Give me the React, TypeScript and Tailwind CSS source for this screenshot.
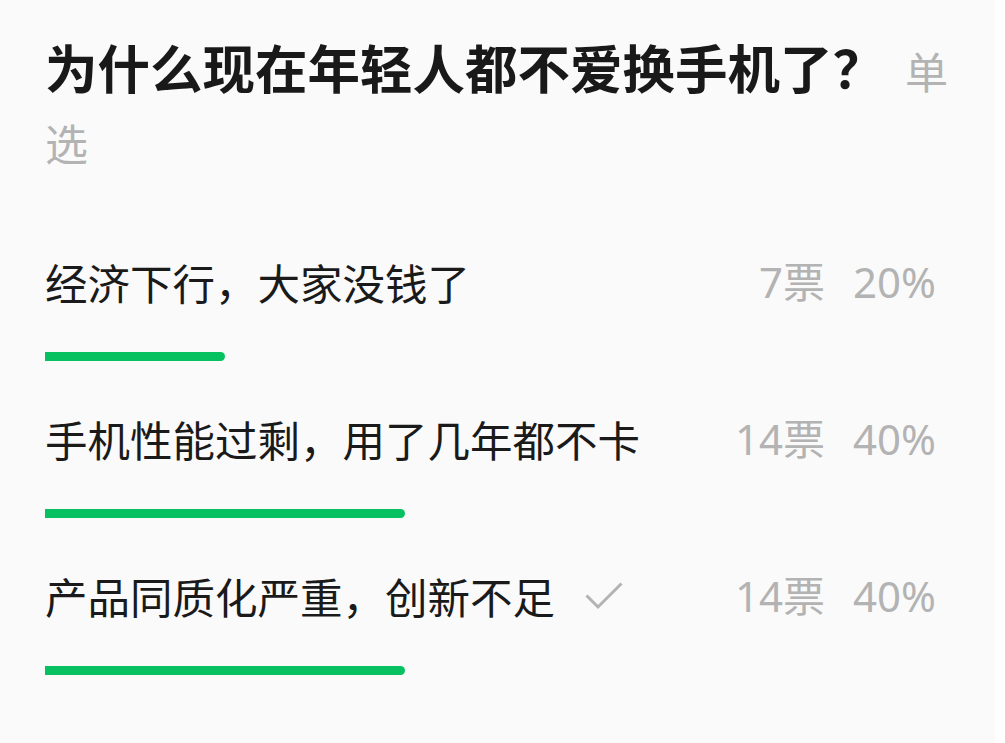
const OPTIONS = [
  { label: "经济下行，大家没钱了", votes: 7, pct: 20, picked: false },
  { label: "手机性能过剩，用了几年都不卡", votes: 14, pct: 40, picked: false },
  { label: "产品同质化严重，创新不足", votes: 14, pct: 40, picked: true },
];

const font = { fontFamily: '"Noto Sans CJK SC", sans-serif' };

function Check() {
  return (
    <svg width="38" height="28" viewBox="0 0 38 28" fill="none" className="ml-[30px] shrink-0">
      <path d="M1.5 13.5 L13 25 L36.5 1.5" stroke="#b3b3b3" strokeWidth="3" />
    </svg>
  );
}

export default function App() {
  return (
    <div className="flex h-[743px] w-full overflow-hidden bg-[#fefefe]" style={font}>
      <main className="w-[995px] shrink-0 bg-[#fafafa] pl-[45px] pr-[45px] pt-[32px]">
        {/* question */}
        <div className="text-[52.5px] font-bold leading-[68px] text-[#191919]">
          为什么现在年轻人都不爱换手机了？
          <span className="ml-[20px] text-[43px] font-normal text-[#b3b3b3]">单选</span>
        </div>

        {/* results */}
        <div className="mt-[78px] flex flex-col gap-[50px]">
          {OPTIONS.map((o, i) => (
            <div key={i}>
              <div className="flex h-[56px] items-center justify-between">
                <div className="flex items-center text-[42.5px] leading-[56px] text-[#1a1a1a]">
                  {o.label}
                  {o.picked && <Check />}
                </div>
                <div
                  className="flex gap-[28px] pr-[14px] text-[42px] leading-[56px] text-[#b3b3b3]"
                  style={{ fontFamily: '"Noto Sans", "Noto Sans CJK SC", sans-serif' }}
                >
                  <span>{o.votes}票</span>
                  <span>{o.pct}%</span>
                </div>
              </div>
              <div className="mt-[42px] h-[9px] w-[900px]">
                <div className="h-full rounded-r-full bg-[#07c160]" style={{ width: `${o.pct}%` }} />
              </div>
            </div>
          ))}
        </div>
      </main>
    </div>
  );
}
